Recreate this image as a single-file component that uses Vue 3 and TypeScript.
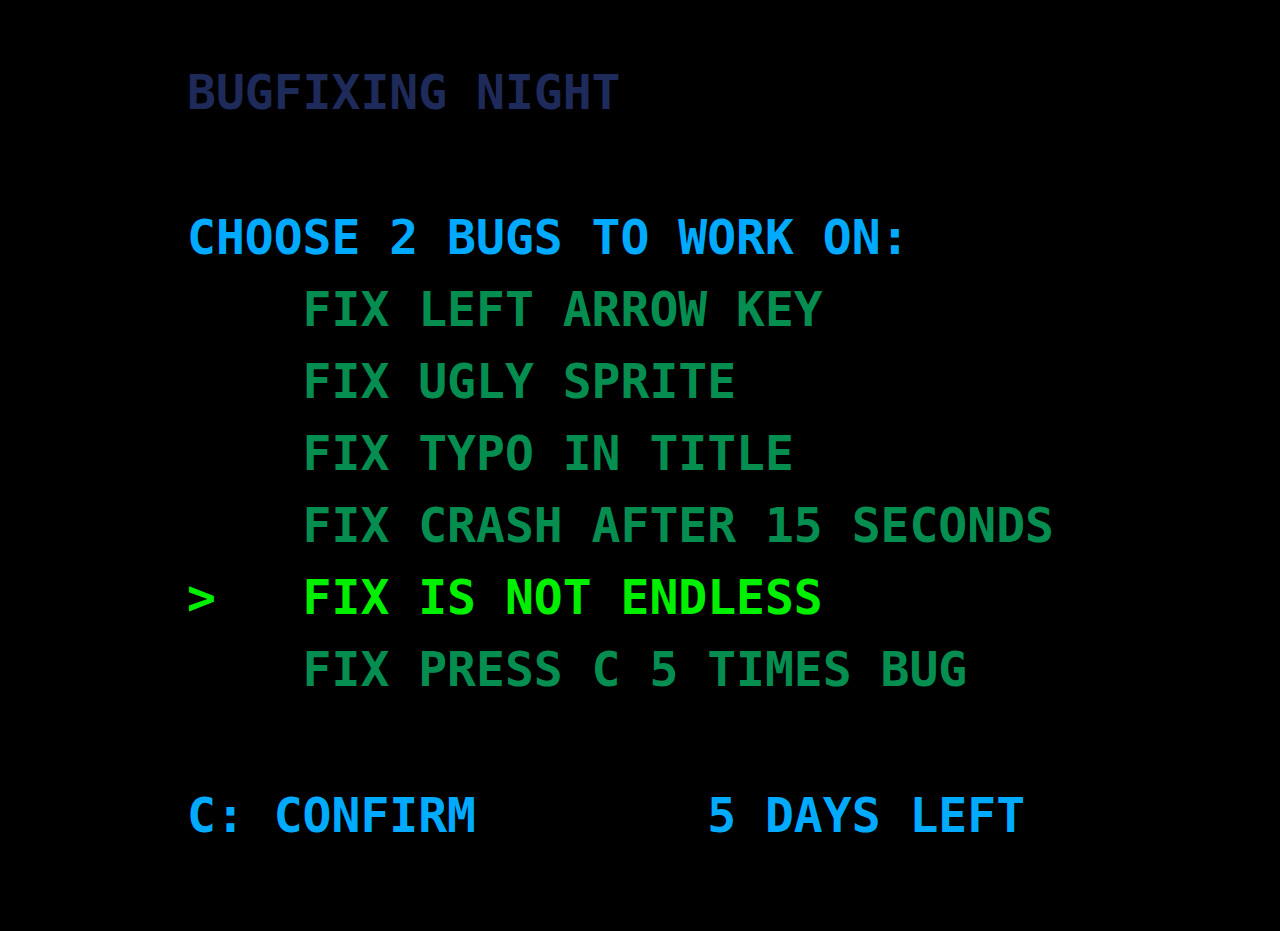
<script setup lang="ts">
import { ref } from 'vue'

const bugs: string[] = [
  'LEFT ARROW KEY',
  'UGLY SPRITE',
  'TYPO IN TITLE',
  'CRASH AFTER 15 SECONDS',
  'IS NOT ENDLESS',
  'PRESS C 5 TIMES BUG',
]
const selected = ref(4)
const daysLeft = 5
</script>

<template>
  <main class="screen">
    <h1 class="title">BUGFIXING NIGHT</h1>
    <h2 class="prompt">CHOOSE 2 BUGS TO WORK ON:</h2>
    <ul class="bugs">
      <li v-for="(bug, i) in bugs" :key="bug">
        <button
          type="button"
          class="bug"
          :class="{ active: i === selected }"
          @click="selected = i"
        >
          <span class="cursor">{{ i === selected ? '>' : '' }}</span>
          <span>FIX {{ bug }}</span>
        </button>
      </li>
    </ul>
    <footer class="status">
      <button type="button" class="confirm">C: CONFIRM</button>
      <span>{{ daysLeft }} DAYS LEFT</span>
    </footer>
  </main>
</template>

<style>
body {
  margin: 0;
  background: #000;
}
</style>

<style scoped>
.screen {
  box-sizing: border-box;
  min-height: 100vh;
  padding: 56px 0 56px 187px;
  background: #000;
  color: #00abff;
  font: bold 48px/72px "DejaVu Sans Mono", monospace;
  white-space: nowrap;
}

.title,
.prompt {
  margin: 0;
  font: inherit;
}

.title {
  margin-bottom: 73px;
  color: #1e2b5a;
}

.bugs {
  margin: 0 0 74px;
  padding: 0;
  list-style: none;
}

.bug,
.confirm {
  margin: 0;
  padding: 0;
  border: 0;
  background: none;
  color: inherit;
  font: inherit;
  text-align: left;
  cursor: pointer;
}

.bug {
  display: flex;
  color: #058e50;
}

.bug.active {
  color: #00f000;
}

.cursor {
  width: 4ch;
}

.status {
  display: flex;
  gap: 8ch;
}
</style>
